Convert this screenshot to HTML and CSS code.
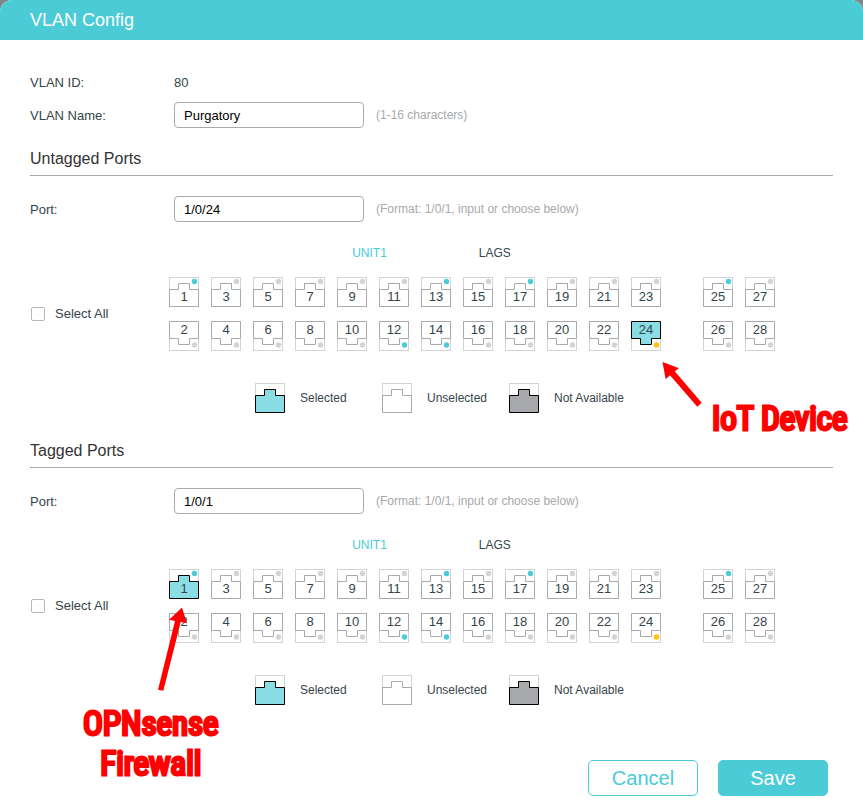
FILE: index.html
```html
<!DOCTYPE html>
<html lang="en">
<head>
<meta charset="utf-8">
<title>VLAN Config</title>
<link rel="stylesheet" href="styles.css">
<script src="ports.js" defer></script>
</head>
<body>
<svg class="sprite" aria-hidden="true">
  <symbol id="port" viewBox="0 0 30 30">
    <rect class="frame" x="0.5" y="0.5" width="29" height="29"/>
    <path class="jack" d="M0.5 12.5H9.5V6.5H20.5V12.5H29.5V29.5H0.5Z"/>
  </symbol>
</svg>
<main class="dialog">
  <header class="dialog-header"><h1>VLAN Config</h1></header>
  <form class="dialog-body">
    <div class="row row-text"><span>VLAN ID:</span><span class="value">80</span></div>
    <div class="row"><label for="name">VLAN Name:</label><input class="field" id="name" type="text" value="Purgatory"><span class="hint">(1-16 characters)</span></div>

    <section class="ports-section">
      <h2>Untagged Ports</h2>
      <div class="row"><label for="untagged">Port:</label><input class="field" id="untagged" type="text" value="1/0/24"><span class="hint">(Format: 1/0/1, input or choose below)</span></div>
      <div class="tabs"><button type="button" class="tab active">UNIT1</button><button type="button" class="tab">LAGS</button></div>
      <div class="panel">
        <label class="select-all"><input type="checkbox">Select All</label>
        <div class="port-groups" data-selected="24"></div>
      </div>
      <div class="legend">
        <span class="legend-item"><svg class="port-icon selected"><use href="#port"/></svg>Selected</span>
        <span class="legend-item"><svg class="port-icon"><use href="#port"/></svg>Unselected</span>
        <span class="legend-item"><svg class="port-icon unavailable"><use href="#port"/></svg>Not Available</span>
      </div>
      <div class="note note-iot">
        <svg class="arrow" width="42" height="48" viewBox="661 361 42 48"><path d="M662.5 362L679 368.3L674.7 371.3L701.7 402.7L697.3 406.7L670 375.3L665.7 379.3Z"/></svg>
        <p>IoT Device</p>
      </div>
    </section>

    <section class="ports-section">
      <h2>Tagged Ports</h2>
      <div class="row"><label for="tagged">Port:</label><input class="field" id="tagged" type="text" value="1/0/1"><span class="hint">(Format: 1/0/1, input or choose below)</span></div>
      <div class="tabs"><button type="button" class="tab active">UNIT1</button><button type="button" class="tab">LAGS</button></div>
      <div class="panel">
        <label class="select-all"><input type="checkbox">Select All</label>
        <div class="port-groups" data-selected="1"></div>
      </div>
      <div class="legend">
        <span class="legend-item"><svg class="port-icon selected"><use href="#port"/></svg>Selected</span>
        <span class="legend-item"><svg class="port-icon"><use href="#port"/></svg>Unselected</span>
        <span class="legend-item"><svg class="port-icon unavailable"><use href="#port"/></svg>Not Available</span>
      </div>
      <div class="note note-firewall">
        <svg class="arrow" width="32" height="86" viewBox="157 606 32 86"><path d="M182 607.5L187 623.3L180.7 622L163.3 690.7L158 689.7L175 621L169 619.7Z"/></svg>
        <p>OPNsense<br>Firewall</p>
      </div>
    </section>

    <div class="actions">
      <button type="button" class="btn">Cancel</button>
      <button type="submit" class="btn btn-primary">Save</button>
    </div>
  </form>
</main>
</body>
</html>
```
FILE: ports.js
```js
// Port status lights: linked ports are teal, slow links amber, the rest grey.
const linked = new Set([1, 12, 13, 14, 17, 25]);
const slow = new Set([24]);

function portButton(number, selected) {
  const top = number % 2 === 1;
  const button = document.createElement("button");
  button.type = "button";
  button.className = "port " + (top ? "port-top" : "port-bottom");
  button.setAttribute("aria-pressed", selected);
  const light = linked.has(number) ? "linked" : slow.has(number) ? "slow" : "";
  button.innerHTML =
    `<svg class="port-icon ${selected ? "selected" : ""}"><use href="#port"/>` +
    `<circle class="light ${light}" cx="25.5" cy="${top ? 4.5 : 6}" r="2.7"/></svg>` +
    `<span>${number}</span>`;
  return button;
}

for (const holder of document.querySelectorAll(".port-groups")) {
  const selected = Number(holder.dataset.selected);
  for (const [first, last] of [[1, 24], [25, 28]]) {
    const group = document.createElement("div");
    group.className = "port-group";
    for (let n = first; n <= last; n++) group.append(portButton(n, n === selected));
    holder.append(group);
  }
}
```
FILE: styles.css
```css
* { box-sizing: border-box; }

body {
  margin: 0;
  background: #7f8689;
  color: #36444b;
  font: 13px/18px "Liberation Sans", Arial, sans-serif;
}

h1, h2, p { margin: 0; font-weight: normal; }
button, input { font: inherit; color: inherit; }
button { padding: 0; border: 0; background: none; cursor: pointer; }

.sprite { position: absolute; width: 0; height: 0; }

.dialog {
  min-height: 100vh;
  background: #fff;
  border-radius: 12px 12px 0 0;
  overflow: hidden;
}
.dialog-header { padding: 0 30px; background: #4acbd6; color: #fff; }
.dialog-header h1 { font-size: 18px; line-height: 40px; }
.dialog-body { padding: 34px 30px 15px; }

.row {
  display: grid;
  grid-template-columns: 144px 190px 1fr;
  align-items: center;
}
.row label { padding-top: 2px; }
.row-text { margin-bottom: 10px; }
.field {
  width: 100%;
  height: 26px;
  padding: 0 9px;
  border: 1px solid #a7a9ac;
  border-radius: 4px;
  background: #fff;
  color: #000;
}
.hint { padding-left: 12px; color: #a7a9ac; font-size: 12px; }

.ports-section { position: relative; margin: 20px 0 27px; }
.ports-section + .ports-section { margin-top: 0; }
h2 {
  margin-bottom: 20px;
  padding: 1px 0 6px;
  border-bottom: 1px solid #a7a9ac;
  color: #333;
  font-size: 16px;
  line-height: 20px;
}

.tabs {
  display: flex;
  justify-content: center;
  gap: 92px;
  margin: 22px 0 15px;
  font-size: 12px;
}
.tab { line-height: 18px; }
.tab.active { color: #4acbd6; }

.panel { display: flex; align-items: center; }
.select-all { display: flex; align-items: center; flex: 0 0 139px; gap: 10px; }
.select-all input {
  appearance: none;
  width: 14px;
  height: 14px;
  margin: 0 0 0 1px;
  border: 1px solid #b5b7b9;
  border-radius: 2px;
  background: #fff;
}

.port-groups { display: flex; gap: 42px; }
.port-group {
  display: grid;
  grid-template-rows: 30px 30px;
  grid-auto-columns: 30px;
  grid-auto-flow: column;
  gap: 14px 12px;
}
.port { display: grid; }
.port > * { grid-area: 1 / 1; }
.port span { z-index: 1; align-self: end; padding-bottom: 1px; }
.port-bottom span { align-self: start; padding: 0; }
.port-bottom .port-icon { transform: scaleY(-1); }

.port-icon { display: block; width: 30px; height: 30px; fill: #fff; stroke: #a7a9ac; }
.port-icon.selected { fill: #8adde4; stroke: #000; }
.port-icon.unavailable { fill: #a7a9ac; stroke: #000; }
.frame { fill: #fff; stroke: #d1d3d4; }
.light { fill: #d1d3d4; stroke: none; }
.light.linked { fill: #4acbd6; }
.light.slow { fill: #ffc20e; }

.legend {
  display: grid;
  grid-template-columns: repeat(3, 127px);
  margin-top: 32px;
  padding-left: 225px;
  font-size: 12px;
}
.legend-item { display: flex; align-items: center; gap: 15px; white-space: nowrap; }

.note {
  position: absolute;
  z-index: 2;
  color: #f00;
  font: 900 33px/40px Impact, "Roboto Condensed", Roboto, sans-serif;
  text-align: center;
  white-space: nowrap;
  pointer-events: none;
  -webkit-text-stroke: 3px #f00;
}
.arrow { display: block; fill: #f00; stroke: none; }
.note-iot { top: 213px; left: 631px; }
.note-iot p { margin: -10px 0 0 51px; }
.note-firewall { top: 166px; left: 53px; }
.note-firewall .arrow { margin-left: 74px; }
.note-firewall p { margin-top: 12px; }

.actions { display: flex; justify-content: flex-end; gap: 20px; margin-top: 55px; padding-right: 5px; }
.btn {
  width: 110px;
  height: 36px;
  border: 1px solid #4acbd6;
  border-radius: 5px;
  color: #4acbd6;
  font-size: 20px;
}
.btn-primary { background: #4acbd6; color: #fff; }
```
